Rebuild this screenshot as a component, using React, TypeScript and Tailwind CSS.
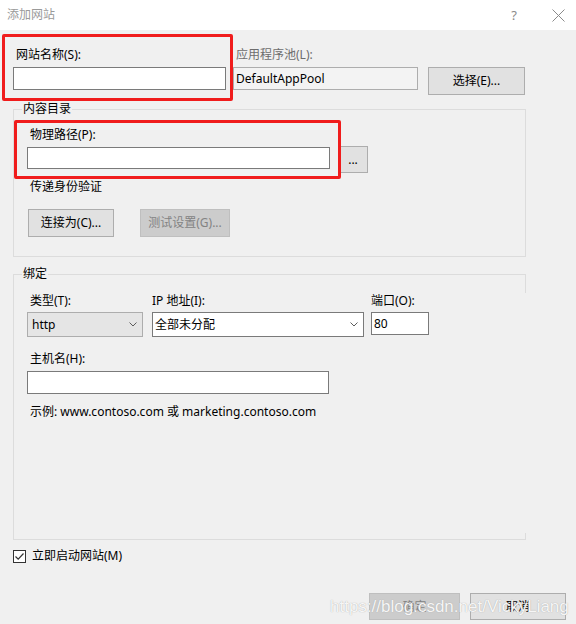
const Chevron = () => (
  <svg width="8" height="5" viewBox="0 0 8 5" className="shrink-0">
    <polyline points="0.5,0.5 4,4 7.5,0.5" fill="none" stroke="#5c5c5c" strokeWidth="1" />
  </svg>
);

const btn = 'flex items-center justify-center border border-[#adadad] bg-[#e1e1e1]';
const btnOff = 'flex items-center justify-center border border-[#bfbfbf] bg-[#cccccc] text-[#838383]';
const field = 'border border-[#7a7a7a] bg-white';

export default function App() {
  return (
    <div className="relative flex h-[624px] w-[576px] flex-col overflow-hidden bg-[#f0f0f0] font-['Noto_Sans','Noto_Sans_CJK_SC',sans-serif] text-[12px] leading-[16px] text-black">
      {/* title bar */}
      <div className="flex h-[30px] shrink-0 items-center bg-white pl-[7px]">
        <span className="text-[#9a9a9a]">添加网站</span>
        <div className="ml-auto flex items-center">
          <span className="mr-[35px] text-[13px] text-[#8a8a8a]">?</span>
          <svg width="13" height="13" viewBox="0 0 13 13" className="mr-[11px]">
            <path d="M0.5 0.5 L12.5 12.5 M12.5 0.5 L0.5 12.5" stroke="#8a8a8a" strokeWidth="1" />
          </svg>
        </div>
      </div>

      <div className="pl-[13px]">
        {/* site name / app pool */}
        <div className="mt-[17px] flex items-start">
          <div className="w-[213px]">
            <div className="pl-[3px]">网站名称(S):</div>
            <div className={`mt-[4px] h-[23px] ${field}`} />
          </div>
          <div className="ml-[7px] w-[185px]">
            <div className="pl-[3px] text-[#6d6d6d]">应用程序池(L):</div>
            <div className="mt-[4px] flex h-[23px] items-center border border-[#adadad] bg-[#f3f3f3] pl-[2px]">
              DefaultAppPool
            </div>
          </div>
          <div className={`ml-[10px] mt-[20px] h-[28px] w-[97px] ${btn}`}>选择(E)...</div>
        </div>

        {/* content directory */}
        <div className="relative mt-[14px] h-[148px] w-[513px] border border-[#dcdcdc] pl-[13px] pt-[17px]">
          <span className="absolute left-[8px] top-[-9px] bg-[#f0f0f0] px-px">内容目录</span>
          <div className="pl-[3px]">物理路径(P):</div>
          <div className="mt-[3px] flex items-start">
            <div className={`mt-px h-[22px] w-[303px] ${field}`} />
            <div className={`ml-[8px] h-[27px] w-[30px] ${btn}`}>...</div>
          </div>
          <div className="mt-[6px] pl-[3px]">传递身份验证</div>
          <div className="mt-[14px] flex">
            <div className={`ml-px h-[28px] w-[86px] ${btn}`}>连接为(C)...</div>
            <div className={`ml-[26px] h-[28px] w-[90px] ${btnOff}`}>测试设置(G)...</div>
          </div>
        </div>

        {/* binding */}
        <div className="relative mt-[17px] h-[266px] w-[513px] border border-r-0 border-[#dcdcdc] pl-[13px] pt-[18px]">
          <span className="absolute left-[8px] top-[-9px] bg-[#f0f0f0] px-px">绑定</span>
          <div className="absolute right-0 top-0 h-[18px] w-px bg-[#dcdcdc]" />
          <div className="absolute bottom-0 right-0 h-[6px] w-px bg-[#dcdcdc]" />
          <div className="flex items-start">
            <div className="w-[116px]">
              <div className="pl-[3px]">类型(T):</div>
              <div className="mt-[3px] flex h-[25px] items-center justify-between border border-[#adadad] bg-[#e5e5e5] pl-[4px] pr-[5px]">
                <span>http</span>
                <Chevron />
              </div>
            </div>
            <div className="ml-[9px] w-[212px]">
              <div>IP 地址(I):</div>
              <div className={`mt-[3px] flex h-[25px] items-center justify-between pl-[2px] pr-[5px] ${field}`}>
                <span>全部未分配</span>
                <Chevron />
              </div>
            </div>
            <div className="ml-[7px] w-[58px]">
              <div>端口(O):</div>
              <div className={`mt-[3px] flex h-[23px] items-center pl-[2px] ${field}`}>80</div>
            </div>
          </div>
          <div className="mt-[14px] pl-[3px]">主机名(H):</div>
          <div className={`mt-[4px] h-[23px] w-[302px] ${field}`} />
          <div className="mt-[10px] pl-[3px]">示例: www.contoso.com 或 marketing.contoso.com</div>
        </div>

        {/* start immediately */}
        <div className="mt-[8px] flex h-[16px] items-center">
          <div className="flex h-[13px] w-[13px] items-center justify-center border border-[#333333] bg-white">
            <svg width="11" height="11" viewBox="0 0 11 11">
              <path d="M1.5 5.5 L4.2 8.2 L9.5 2.5" fill="none" stroke="#333333" strokeWidth="1.2" />
            </svg>
          </div>
          <span className="ml-[6px]">立即启动网站(M)</span>
        </div>
      </div>

      {/* dialog buttons */}
      <div className="mt-[29px] flex justify-end pr-[10px]">
        <div className={`h-[27px] w-[91px] ${btnOff}`}>确定</div>
        <div className={`ml-[10px] h-[27px] w-[96px] ${btn}`}>取消</div>
      </div>

      {/* watermark */}
      <div className="pointer-events-none absolute left-[330px] top-[596px] font-['Liberation_Sans',sans-serif] text-[17px] leading-[22px] text-white/90 [text-shadow:0_0_1px_#9a9a9a]">
        https://blog.csdn.net/VickyLiang
      </div>

      {/* red annotation boxes */}
      <div className="pointer-events-none absolute left-[2px] top-[34px] h-[67px] w-[231px] rounded-[2px] border-[3px] border-[#f01c1c]" />
      <div className="pointer-events-none absolute left-[14px] top-[120px] h-[59px] w-[327px] rounded-[2px] border-[3px] border-[#f01c1c]" />
    </div>
  );
}
